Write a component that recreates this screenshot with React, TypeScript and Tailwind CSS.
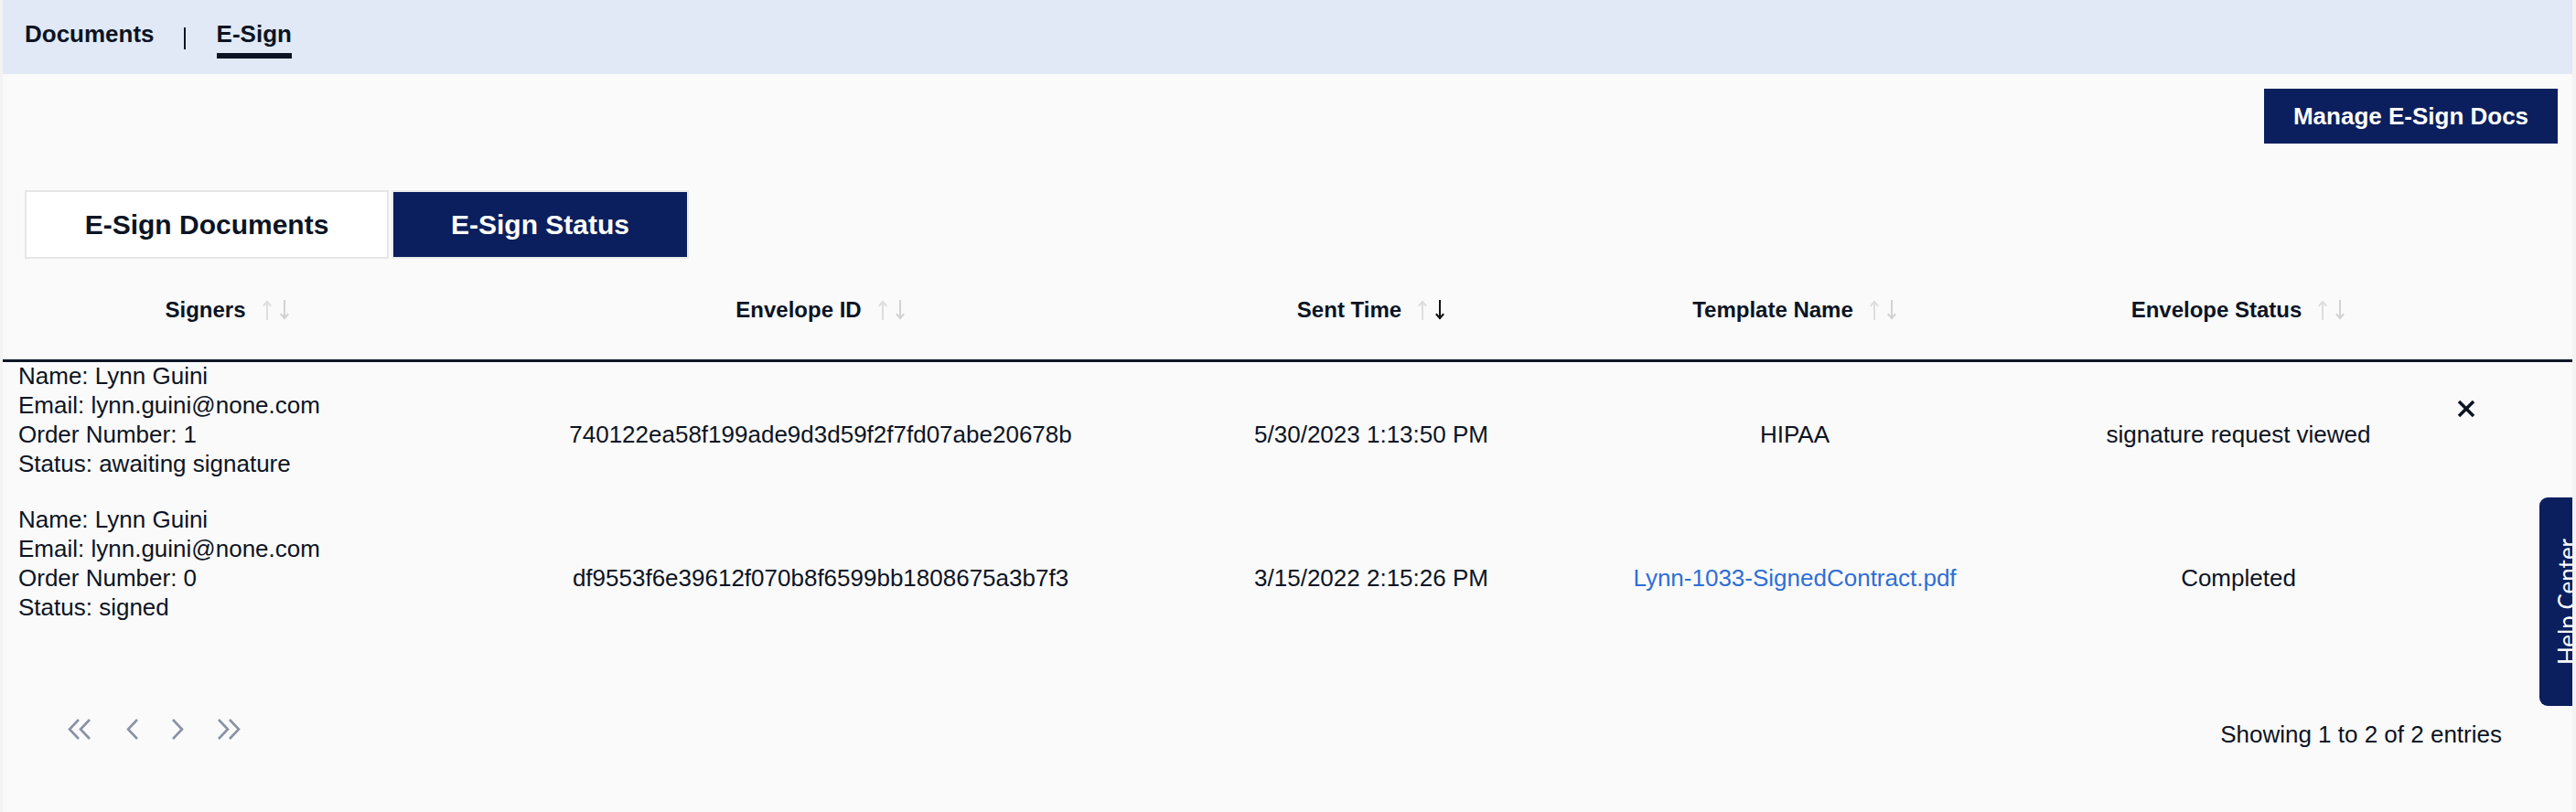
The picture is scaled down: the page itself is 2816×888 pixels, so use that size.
import React from 'react';

const ink = 'text-[#0c1424]';

const SortArrows: React.FC<{ active?: 'down' | 'up' }> = ({ active }) => (
  <svg width="30" height="22" viewBox="0 0 30 22" className="ml-[18px] shrink-0">
    <g fill="none" strokeWidth="2" strokeLinecap="square">
      <g stroke={active === 'up' ? '#111111' : '#dedede'}>
        <path d="M5 2 L5 21" />
        <path d="M1.5 6 L5 2 L8.5 6" />
      </g>
      <g stroke={active === 'down' ? '#111111' : '#d2d2d2'}>
        <path d="M24 1 L24 20" />
        <path d="M20.5 16 L24 20 L27.5 16" />
      </g>
    </g>
  </svg>
);

const Chevron: React.FC<{ dir: 'left' | 'right'; double?: boolean }> = ({ dir, double }) => {
  const w = double ? 26 : 13;
  const one = dir === 'left' ? 'M12 1 L2 11.5 L12 22' : 'M1 1 L11 11.5 L1 22';
  const two = dir === 'left' ? 'M24 1 L14 11.5 L24 22' : 'M13 1 L23 11.5 L13 22';
  return (
    <svg width={w} height="23" viewBox={`0 0 ${w} 23`} className="shrink-0">
      <g fill="none" stroke="#8a91a6" strokeWidth="2.6" strokeLinejoin="miter">
        <path d={one} />
        {double && <path d={two} />}
      </g>
    </svg>
  );
};

const rows = [
  {
    name: 'Lynn Guini',
    email: 'lynn.guini@none.com',
    order: '1',
    status: 'awaiting signature',
    envelope: '740122ea58f199ade9d3d59f2f7fd07abe20678b',
    sent: '5/30/2023 1:13:50 PM',
    template: 'HIPAA',
    link: false,
    envStatus: 'signature request viewed',
    canVoid: true,
  },
  {
    name: 'Lynn Guini',
    email: 'lynn.guini@none.com',
    order: '0',
    status: 'signed',
    envelope: 'df9553f6e39612f070b8f6599bb1808675a3b7f3',
    sent: '3/15/2022 2:15:26 PM',
    template: 'Lynn-1033-SignedContract.pdf',
    link: true,
    envStatus: 'Completed',
    canVoid: false,
  },
];

const cols = 'grid grid-cols-[491px_806px_398px_528px_442px_1fr]';

export default function App() {
  return (
    <div
      className={`relative w-[2816px] h-[888px] overflow-hidden bg-[#fafafa] border-l-[3px] border-r-[4px] border-[#f3f3f3] ${ink}`}
      style={{ fontFamily: '"Liberation Sans", Arial, sans-serif' }}
    >
      {/* top nav */}
      <div className="h-[81px] bg-[#e1e9f6] flex items-start pt-[22px] pl-[24px] text-[26px] leading-[30px] font-bold">
        <span>Documents</span>
        <span className="ml-[32px] mt-[8px] w-[2px] h-[24px] bg-[#0c1424]" />
        <span className="ml-[34px] pb-[6px] border-b-[6px] border-[#0c1424]">E-Sign</span>
      </div>

      <div className="flex justify-end mt-[16px] mr-[16px]">
        <button className="w-[321px] h-[60px] bg-[#0b1f5e] text-white text-[26px] font-bold flex items-center justify-center">
          Manage E-Sign Docs
        </button>
      </div>

      {/* tabs */}
      <div className="flex gap-[3px] mt-[51px] ml-[24px] h-[75px]">
        <button className="w-[398px] h-full bg-white border-2 border-[#e6e6e6] text-[30px] font-bold">
          E-Sign Documents
        </button>
        <button className="w-[325px] h-full bg-[#0b1f5e] border-2 border-[#ebebeb] text-white text-[30px] font-bold">
          E-Sign Status
        </button>
      </div>

      {/* table header */}
      <div className={`${cols} h-[113px] border-b-[3px] border-[#0e1726] text-[24px] font-bold`}>
        {[
          ['Signers', undefined],
          ['Envelope ID', undefined],
          ['Sent Time', 'down'],
          ['Template Name', undefined],
          ['Envelope Status', undefined],
        ].map(([label, act]) => (
          <div key={label} className="flex items-center justify-center pt-[4px] pb-[3px]">
            <span>{label}</span>
            <SortArrows active={act as 'down' | undefined} />
          </div>
        ))}
        <div />
      </div>

      {/* rows */}
      {rows.map((r, i) => (
        <div key={i} className={`${cols} text-[26px] leading-[32px]`}>
          <div className="pl-[17px] pb-[30px] -mt-[1px]">
            <div>Name: {r.name}</div>
            <div>Email: {r.email}</div>
            <div>Order Number: {r.order}</div>
            <div>Status: {r.status}</div>
          </div>
          <div className="flex items-center justify-center">{r.envelope}</div>
          <div className="flex items-center justify-center">{r.sent}</div>
          <div className="flex items-center justify-center">
            {r.link ? <a className="text-[#2f6ed6] cursor-pointer">{r.template}</a> : r.template}
          </div>
          <div className="flex items-center justify-center">{r.envStatus}</div>
          <div className="pl-[18px] pt-[41px]">
            {r.canVoid && (
              <svg width="20" height="20" viewBox="0 0 20 20">
                <g stroke="#0c1424" strokeWidth="3.6" strokeLinecap="butt">
                  <path d="M2 2 L18 18" />
                  <path d="M18 2 L2 18" />
                </g>
              </svg>
            )}
          </div>
        </div>
      ))}

      {/* pagination */}
      <div className="flex items-center h-[174px] pl-[71px] pr-[77px]">
        <Chevron dir="left" double />
        <span className="ml-[38px]"><Chevron dir="left" /></span>
        <span className="ml-[37px]"><Chevron dir="right" /></span>
        <span className="ml-[37px]"><Chevron dir="right" double /></span>
        <span className="ml-auto mt-[11px] text-[26px] leading-[32px]">Showing 1 to 2 of 2 entries</span>
      </div>

      {/* help center tab */}
      <div className="absolute left-[2773px] top-[544px] w-[36px] h-[228px] bg-[#0b1f5e] rounded-l-[9px] overflow-hidden flex items-center justify-center">
        <span
          className="whitespace-nowrap text-white text-[26px] leading-[32px] -rotate-90 translate-x-[12px]"
          style={{ fontFamily: 'Lato, "Open Sans", sans-serif' }}
        >
          Help Center
        </span>
      </div>
    </div>
  );
}
